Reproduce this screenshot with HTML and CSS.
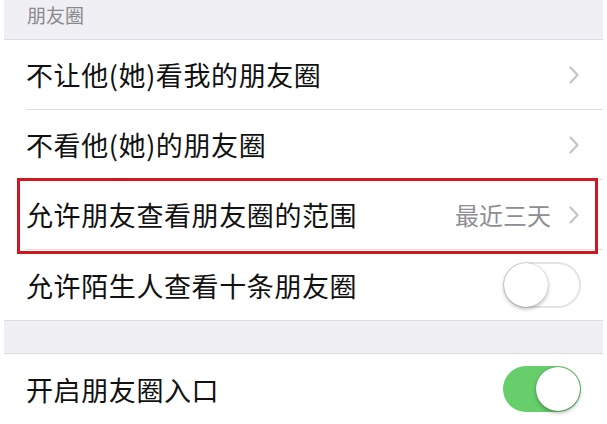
FILE: index.html
```html
<!DOCTYPE html>
<html lang="zh">
<head>
<meta charset="utf-8">
<link rel="stylesheet" href="styles.css">
</head>
<body>
<div class="page">
  <div class="section-header">朋友圈</div>
  <div class="group">
    <div class="row">
      <span class="label">不让他(她)看我的朋友圈</span>
      <span class="accessory"><svg class="chevron" viewBox="0 0 10 18"><polyline points="1.5,1.5 8.5,9 1.5,16.5"/></svg></span>
    </div>
    <div class="row">
      <span class="label">不看他(她)的朋友圈</span>
      <span class="accessory"><svg class="chevron" viewBox="0 0 10 18"><polyline points="1.5,1.5 8.5,9 1.5,16.5"/></svg></span>
    </div>
    <div class="row highlighted">
      <span class="label">允许朋友查看朋友圈的范围</span>
      <span class="accessory"><span class="detail">最近三天</span><svg class="chevron" viewBox="0 0 10 18"><polyline points="1.5,1.5 8.5,9 1.5,16.5"/></svg></span>
    </div>
    <div class="row last">
      <span class="label">允许陌生人查看十条朋友圈</span>
      <span class="toggle"><span class="knob"></span></span>
    </div>
  </div>
  <div class="spacer"></div>
  <div class="group">
    <div class="row last">
      <span class="label">开启朋友圈入口</span>
      <span class="toggle on"><span class="knob"></span></span>
    </div>
  </div>
  <div class="spacer small"></div>
</div>
</body>
</html>
```

FILE: styles.css
```css
html, body {
  margin: 0;
  padding: 0;
  background: #ffffff;
}
body {
  font-family: "Noto Sans CJK SC", "Noto Sans", sans-serif;
  color: #111111;
}
.page {
  margin: 0 4px;
  background: #efeff4;
  height: 424px;
  overflow: hidden;
}
.section-header {
  height: 39px;
  padding-left: 23px;
  font-size: 19px;
  line-height: 30px;
  color: #8a8a8f;
  border-bottom: 1px solid #dcdce0;
}
.group {
  background: #ffffff;
  border-bottom: 1px solid #dcdce0;
}
.row {
  position: relative;
  display: flex;
  align-items: center;
  justify-content: space-between;
  height: 69px;
  margin-left: 22px;
  padding-right: 24px;
  border-bottom: 1px solid #dedee2;
}
.row.last {
  border-bottom: none;
  height: 70px;
}
.label {
  font-size: 27px;
  letter-spacing: 0.6px;
}
.accessory {
  display: flex;
  align-items: center;
  gap: 18px;
}
.detail {
  font-size: 24px;
  color: #8e8e93;
}
.chevron {
  width: 10px;
  height: 18px;
  fill: none;
  stroke: #c4c4c9;
  stroke-width: 2.2;
  stroke-linecap: round;
  stroke-linejoin: round;
}
.highlighted::after {
  content: "";
  position: absolute;
  left: -9px;
  right: 5px;
  top: -2px;
  bottom: -5px;
  border: 3px solid #d0161f;
}
.toggle {
  position: relative;
  width: 78px;
  height: 46px;
  border-radius: 23px;
  background: #ffffff;
  box-shadow: inset 0 0 0 2px #e4e4e7;
  margin-right: -2px;
}
.toggle .knob {
  position: absolute;
  top: 1px;
  left: 1px;
  width: 44px;
  height: 44px;
  border-radius: 50%;
  background: #ffffff;
  box-shadow: 0 2px 4px rgba(0, 0, 0, 0.28), 0 0 1px rgba(0, 0, 0, 0.3);
}
.toggle.on {
  background: #66cf6c;
  box-shadow: none;
}
.toggle.on .knob {
  left: auto;
  right: 1px;
  box-shadow: 0 2px 4px rgba(0, 0, 0, 0.3), 0 0 1px rgba(0, 0, 0, 0.4);
}
.spacer {
  height: 32px;
  border-bottom: 1px solid #dcdce0;
}
.spacer.small {
  height: 4px;
  border-bottom: none;
}
```
